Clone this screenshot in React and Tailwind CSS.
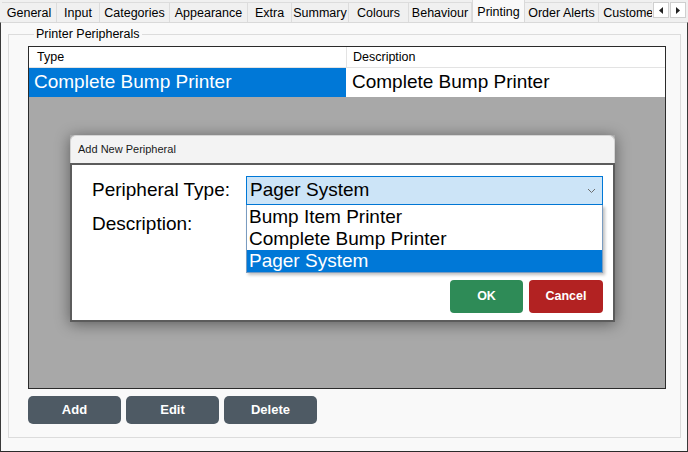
import React from 'react';

// tab widths measured off the strip, each class written out in full
const tabs = [
    { label: 'General', w: 'w-[55px]' },
    { label: 'Input', w: 'w-[43px]' },
    { label: 'Categories', w: 'w-[70px]' },
    { label: 'Appearance', w: 'w-[78px]' },
    { label: 'Extra', w: 'w-[44px]' },
    { label: 'Summary', w: 'w-[57px]' },
    { label: 'Colours', w: 'w-[60px]' },
    { label: 'Behaviour', w: 'w-[63px]' },
    { label: 'Printing', w: 'w-[53px]', active: true },
    { label: 'Order Alerts', w: 'w-[74px]' },
    { label: 'Customers', w: 'w-[70px]' },
];

const peripheralTypes = ['Bump Item Printer', 'Complete Bump Printer', 'Pager System'];

const TabStrip = () => (
    <div className="flex h-[22px] items-end pl-[2px]">
        <div className="flex h-full w-[650px] items-end overflow-hidden">
            {tabs.map((t) =>
                t.active ? (
                    <div
                        key={t.label}
                        className={`${t.w} relative z-10 -mb-px flex h-[24px] shrink-0 items-start justify-center border-x border-t border-[#d9d9d9] bg-[#f9f9f9] pt-[3px] text-[12.5px] text-black`}
                    >
                        {t.label}
                    </div>
                ) : (
                    <div
                        key={t.label}
                        className={`${t.w} flex h-[20px] shrink-0 items-center justify-center whitespace-nowrap border-r border-t border-[#dcdcdc] bg-[#f0f0f0] pt-px text-[12.5px] text-black`}
                    >
                        {t.label}
                    </div>
                )
            )}
        </div>
        {/* scroll arrows */}
        <div className="mb-[4px] ml-[1px] flex gap-px self-end">
            <div className="flex h-[16px] w-[16px] items-center justify-center border border-[#cfcfcf] bg-white">
                <svg width="4" height="7" viewBox="0 0 4 7"><path d="M4 0 L0 3.5 L4 7 Z" fill="#222" /></svg>
            </div>
            <div className="flex h-[16px] w-[16px] items-center justify-center border border-[#cfcfcf] bg-white">
                <svg width="4" height="7" viewBox="0 0 4 7"><path d="M0 0 L4 3.5 L0 7 Z" fill="#222" /></svg>
            </div>
        </div>
    </div>
);

const DarkButton = ({ children }) => (
    <button className="flex h-[28px] w-[93px] items-center justify-center rounded-[5px] bg-[#4e5a64] text-[13px] font-bold text-white">
        {children}
    </button>
);

const AddPeripheralDialog = () => (
    <div className="absolute left-[70px] top-[135px] w-[545px] shadow-[0_2px_14px_rgba(0,0,0,0.45)]">
        <div className="flex h-[28px] items-center rounded-t-[6px] border border-b-0 border-[#d4d4d4] bg-[#f3f3f3] pl-[7px] text-[11px] text-[#1a1a1a]">
            Add New Peripheral
        </div>
        <div className="border-2 border-[#5c5c5c] bg-white pb-[7px] pl-[20px] pr-[10px] pt-[11px] text-[19px] text-black">
            <div className="flex h-[29px] items-center">
                <div className="w-[154px]">Peripheral Type:</div>
                <div className="relative flex-1">
                    <div className="flex h-[29px] items-center justify-between border border-[#0078d7] bg-[#cce4f7] pl-[3px] pr-[6px]">
                        <span>Pager System</span>
                        <svg width="9" height="6" viewBox="0 0 9 6">
                            <polyline points="1,1 4.5,4.5 8,1" fill="none" stroke="#6d6d6d" strokeWidth="1" />
                        </svg>
                    </div>
                    {/* open dropdown list */}
                    <div className="absolute left-0 right-0 top-full z-20 border border-t-0 border-[#7a9cc0] bg-white pt-px shadow-[2px_2px_3px_rgba(0,0,0,0.25)]">
                        {peripheralTypes.map((p) => (
                            <div
                                key={p}
                                className={
                                    p === 'Pager System'
                                        ? 'flex h-[22px] items-center bg-[#0078d7] pl-[2px] text-[19px] text-white'
                                        : 'flex h-[22px] items-center pl-[2px] text-[19px] text-black'
                                }
                            >
                                {p}
                            </div>
                        ))}
                    </div>
                </div>
            </div>
            <div className="mt-[5px] flex h-[28px] items-center">
                <div className="w-[154px]">Description:</div>
            </div>
            <div className="mt-[42px] flex justify-end gap-[6px]">
                <button className="flex h-[33px] w-[73px] items-center justify-center rounded-[4px] bg-[#2e8b57] text-[12.5px] font-bold text-white">
                    OK
                </button>
                <button className="flex h-[33px] w-[74px] items-center justify-center rounded-[4px] bg-[#b22222] text-[12.5px] font-bold text-white">
                    Cancel
                </button>
            </div>
        </div>
    </div>
);

export default function App() {
    return (
        <div className="relative flex h-[452px] w-[688px] flex-col bg-[#f0f0f0] font-['Liberation_Sans',Arial,sans-serif]">
            <TabStrip />

            {/* tab page */}
            <div className="flex flex-1 flex-col border-x border-b border-t border-x-[#3a3a3a] border-b-[#2a2a2a] border-t-[#d9d9d9] bg-[#f9f9f9] pb-[13px] pl-[7px] pr-[6px] pt-[3px]">
                <fieldset className="flex flex-1 flex-col border border-[#dcdcdc] pb-[12px] pl-[19px] pr-[14px]">
                    <legend className="ml-[6px] px-[2px] text-[12.5px] leading-[16px] text-black">Printer Peripherals</legend>

                    {/* grid */}
                    <div className="mt-[4px] flex h-[343px] flex-col border border-[#2b2b2b] bg-[#a8a8a8]">
                        <div className="grid h-[21px] grid-cols-[318px_1fr] border-b border-[#e3e3e3] bg-white text-[12.5px] text-black">
                            <div className="flex items-center border-r border-[#e3e3e3] pl-[8px]">Type</div>
                            <div className="flex items-center pl-[6px]">Description</div>
                        </div>
                        <div className="grid h-[27px] grid-cols-[318px_1fr] text-[19px]">
                            <div className="flex items-center border-r border-white bg-[#0078d7] pl-[5px] text-white">
                                Complete Bump Printer
                            </div>
                            <div className="flex items-center bg-white pl-[5px] text-black">Complete Bump Printer</div>
                        </div>
                    </div>

                    <div className="mt-[7px] flex gap-[5px]">
                        <DarkButton>Add</DarkButton>
                        <DarkButton>Edit</DarkButton>
                        <DarkButton>Delete</DarkButton>
                    </div>
                </fieldset>
            </div>

            <AddPeripheralDialog />
        </div>
    );
}
